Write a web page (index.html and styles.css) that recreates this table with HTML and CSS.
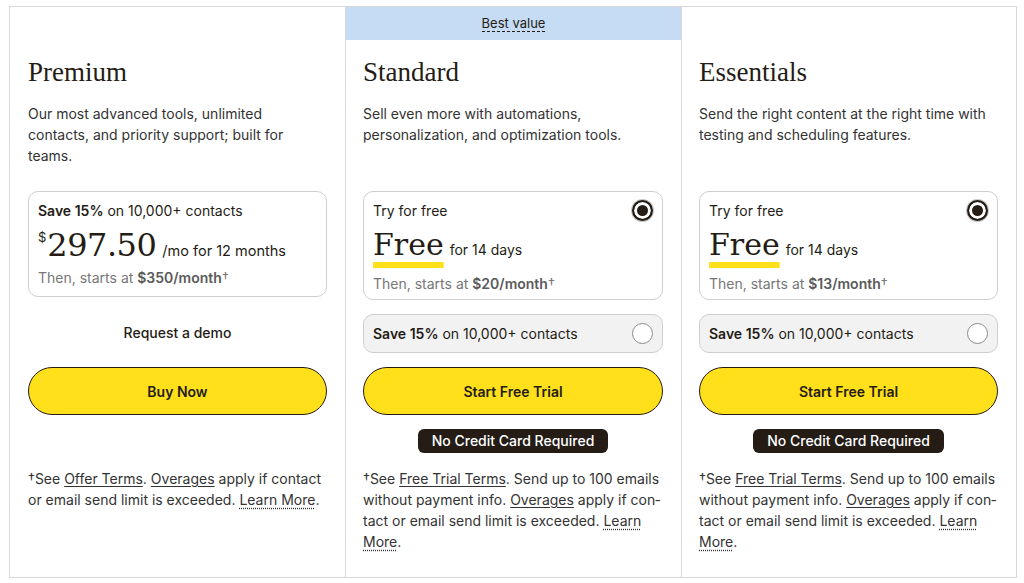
FILE: index.html
```html
<!DOCTYPE html>
<html lang="en">
<head>
<meta charset="utf-8">
<title>Plans</title>
<link rel="stylesheet" href="styles.css">
</head>
<body>
<div class="plans">
  <section class="plan">
    <div class="ribbon"></div>
    <h2 class="plan-title">Premium</h2>
    <p class="plan-desc">Our most advanced tools, unlimited contacts, and priority support; built for teams.</p>
    <div class="options">
      <div class="option">
        <div class="opt-line"><span><b>Save 15%</b> on 10,000+ contacts</span></div>
        <div class="price-row">
          <span class="currency">$</span><span class="price">297.50</span><span class="price-term">/mo for 12 months</span>
        </div>
        <div class="then">Then, starts at <b>$350/month</b>†</div>
      </div>
      <a class="demo" href="#">Request a demo</a>
    </div>
    <button class="cta">Buy Now</button>
    <p class="note note-solo">†See <a class="ul" href="#">Offer Terms</a>. <a class="ul" href="#">Overages</a> apply if contact or email send limit is exceeded. <a class="dot" href="#">Learn More</a>.</p>
  </section>

  <section class="plan">
    <div class="ribbon ribbon-on"><span class="ribbon-text">Best value</span></div>
    <h2 class="plan-title">Standard</h2>
    <p class="plan-desc">Sell even more with automations, personalization, and optimization tools.</p>
    <div class="options">
      <div class="option">
        <div class="opt-line"><span>Try for free</span><span class="radio radio-on"></span></div>
        <div class="free-row"><span class="free">Free</span><span class="free-term">for 14 days</span></div>
        <div class="then then-free">Then, starts at <b>$20/month</b>†</div>
      </div>
      <div class="option option-alt">
        <span><b>Save 15%</b> on 10,000+ contacts</span><span class="radio"></span>
      </div>
    </div>
    <button class="cta">Start Free Trial</button>
    <div class="badge">No Credit Card Required</div>
    <p class="note">†See <a class="ul" href="#">Free Trial Terms</a>. Send up to 100 emails without payment info. <a class="ul" href="#">Overages</a> apply if con&shy;tact or email send limit is exceeded. <a class="dot" href="#">Learn More</a>.</p>
  </section>

  <section class="plan">
    <div class="ribbon"></div>
    <h2 class="plan-title">Essentials</h2>
    <p class="plan-desc">Send the right content at the right time with testing and scheduling features.</p>
    <div class="options">
      <div class="option">
        <div class="opt-line"><span>Try for free</span><span class="radio radio-on"></span></div>
        <div class="free-row"><span class="free">Free</span><span class="free-term">for 14 days</span></div>
        <div class="then then-free">Then, starts at <b>$13/month</b>†</div>
      </div>
      <div class="option option-alt">
        <span><b>Save 15%</b> on 10,000+ contacts</span><span class="radio"></span>
      </div>
    </div>
    <button class="cta">Start Free Trial</button>
    <div class="badge">No Credit Card Required</div>
    <p class="note">†See <a class="ul" href="#">Free Trial Terms</a>. Send up to 100 emails without payment info. <a class="ul" href="#">Overages</a> apply if con&shy;tact or email send limit is exceeded. <a class="dot" href="#">Learn More</a>.</p>
  </section>
</div>
</body>
</html>
```

FILE: styles.css
```css
* { box-sizing: border-box; }
html, body { margin: 0; padding: 0; background: #fff; }
body {
  font-family: Inter, "Liberation Sans", sans-serif;
  font-size: 14px;
  line-height: 21px;
  color: #241c15;
}
.plans {
  display: grid;
  grid-template-columns: 335px 336px 335px;
  margin: 6px 7px 0 9px;
  height: 572px;
  border: 1px solid #d8d8d8;
}
.plan {
  display: flex;
  flex-direction: column;
  padding: 0 18px 0 17px;
  border-left: 1px solid #d8d8d8;
}
.plan:first-child { border-left: none; padding-left: 18px; }
.ribbon {
  height: 33px;
  margin: 0 -18px 0 -17px;
  display: flex;
  align-items: center;
  justify-content: center;
}
.ribbon-on { background: #c6dcf4; }
.ribbon-text {
  font-size: 13px;
  border-bottom: 1px dashed #241c15;
  line-height: 16px;
}
.plan-title {
  margin: 16px 0 0;
  font-family: "Liberation Serif", serif;
  font-weight: 400;
  font-size: 27px;
  line-height: 32px;
}
.plan-desc {
  margin: 15px 0 0;
  padding-right: 6px;
  min-height: 63px;
  color: #333;
}
.options {
  margin-top: 25px;
  height: 162px;
  display: flex;
  flex-direction: column;
}
.option {
  border: 1px solid #cfcfcf;
  border-radius: 10px;
  padding: 8px 9px 8px 9px;
}
.opt-line {
  display: flex;
  justify-content: space-between;
  align-items: center;
}
b { font-weight: 600; }
.price-row {
  display: flex;
  align-items: baseline;
  height: 36px;
  margin-top: 6px;
}
.currency {
  align-self: flex-start;
  font-size: 13px;
  line-height: 14px;
  margin-top: 3px;
  margin-right: 1px;
}
.price {
  font-family: "DejaVu Serif", serif;
  font-size: 32px;
  line-height: 36px;
  letter-spacing: -0.5px;
}
.price-term { margin-left: 6px; font-size: 14.5px; }
.then { color: #777; margin-top: 4px; }
.then b { color: #5a5a5a; }
.free-row {
  display: flex;
  align-items: baseline;
  margin-top: 6px;
  height: 36px;
}
.free {
  font-family: "DejaVu Serif", serif;
  font-size: 30px;
  line-height: 36px;
  text-decoration: underline;
  text-decoration-color: #ffe01b;
  text-decoration-thickness: 6px;
  text-underline-offset: 7px;
  text-decoration-skip-ink: none;
}
.free-term { margin-left: 6px; }
.then-free { margin-top: 10px; }
.plan:not(:first-child) .option:first-child { padding-bottom: 5px; }
.option-alt {
  margin-top: 14px;
  height: 40px;
  padding: 0 9px;
  background: #f2f2f2;
  display: flex;
  align-items: center;
  justify-content: space-between;
}
.radio {
  width: 21px;
  height: 21px;
  border-radius: 50%;
  border: 1.5px solid #8a8a8a;
  background: #fff;
  flex: none;
}
.radio-on {
  border: 2px solid #241c15;
  background: #241c15;
  box-shadow: inset 0 0 0 3px #fff, 0 0 0 1px #c8c8c8;
}
.demo {
  margin-top: 25px;
  text-align: center;
  color: #241c15;
  text-decoration: none;
  font-weight: 500;
}
.cta {
  margin-top: 14px;
  height: 48px;
  width: 100%;
  border: 1px solid #241c15;
  border-radius: 24px;
  background: #ffe01b;
  font-family: inherit;
  font-size: 14px;
  font-weight: 600;
  color: #241c15;
}
.badge {
  margin-top: 14px;
  align-self: center;
  height: 24px;
  padding: 0 14px;
  border-radius: 6px;
  background: #241c15;
  color: #fff;
  font-weight: 500;
  line-height: 24px;
}
.note {
  margin: 15px 0 0;
  color: #333;
}
.note-solo { margin-top: 53px; }
.note a { color: #333; }
.ul { text-decoration: underline; text-underline-offset: 2px; }
.dot { text-decoration: underline dotted; text-underline-offset: 3px; }
```
